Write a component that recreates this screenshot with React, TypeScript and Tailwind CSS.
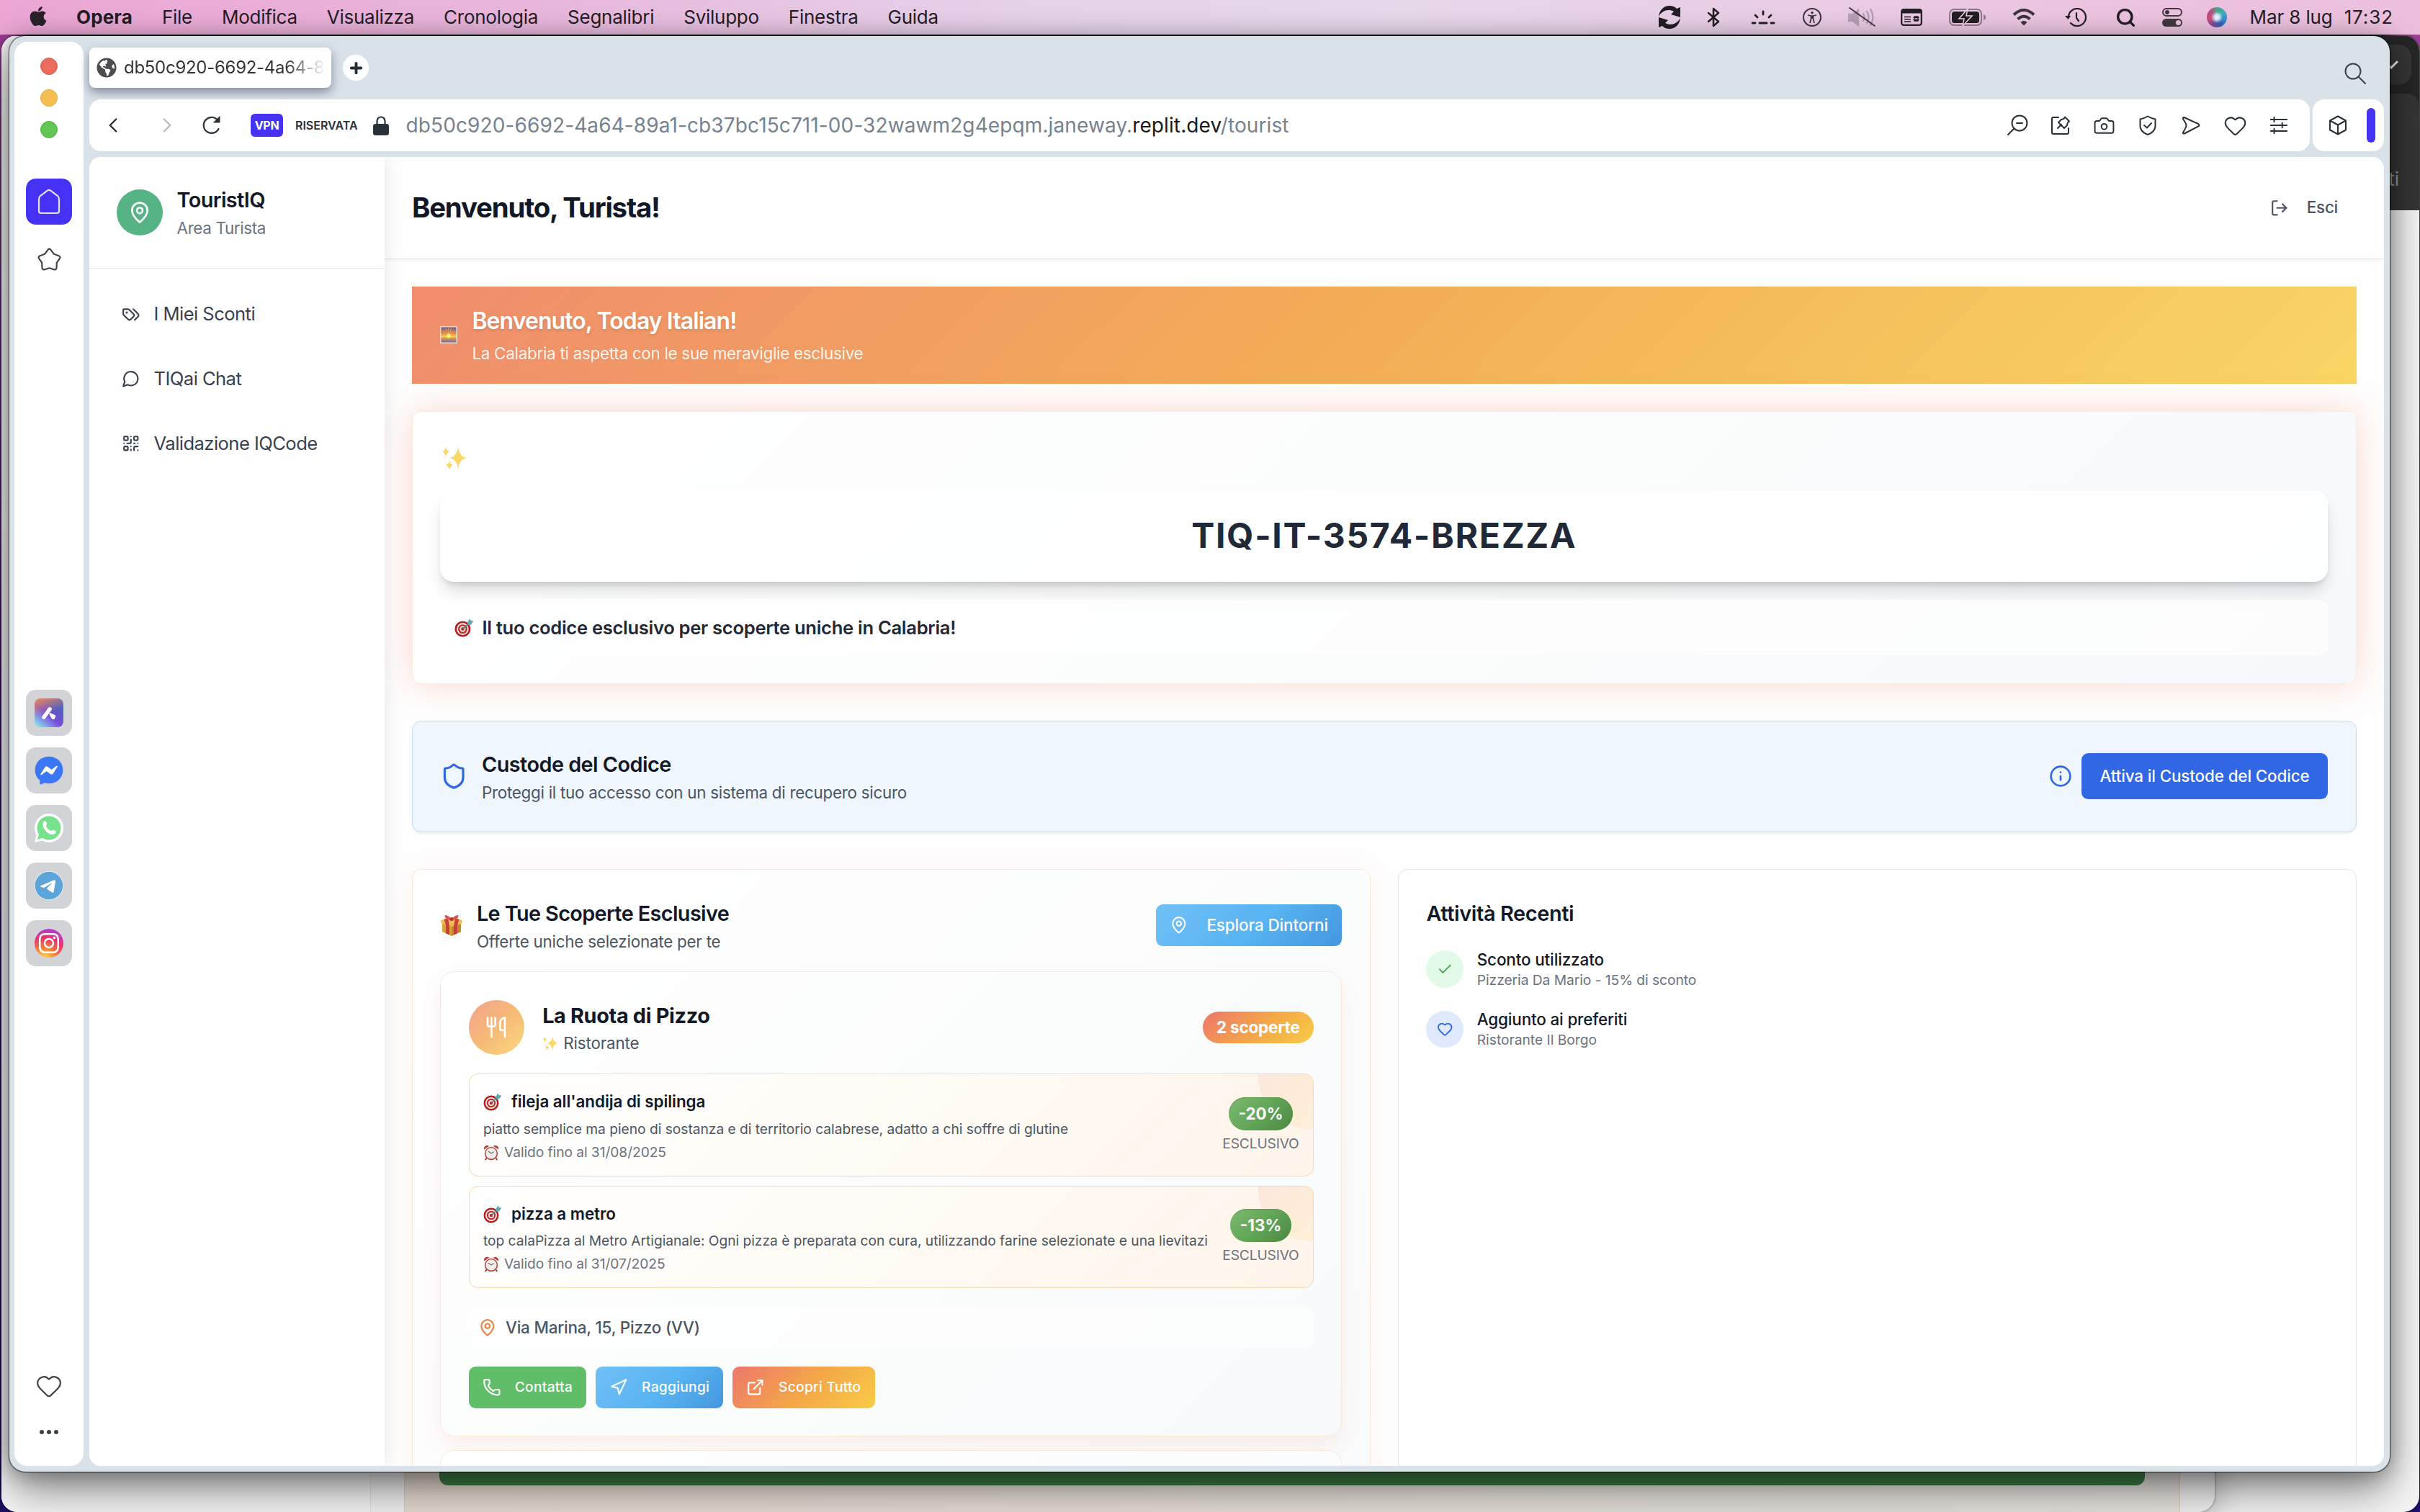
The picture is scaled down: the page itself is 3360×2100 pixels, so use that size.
import React from 'react';
import {
  Camera,
  Check,
  ChevronLeft,
  ChevronRight,
  ExternalLink,
  Heart,
  Info,
  LogOut,
  MapPin,
  Navigation,
  Phone,
  Plus,
  QrCode,
  Search,
  Shield,
  Utensils,
} from 'lucide-react';
import { FaApple, FaTelegram } from 'react-icons/fa6';
import { FaFacebookMessenger, FaInstagram, FaGlobeAmericas } from 'react-icons/fa';

/* ---------- Emoji drawings ---------- */

function Target({ className }: { className: string }) {
  return (
    <svg viewBox="0 0 26 26" className={className}>
      <circle cx="11" cy="15" r="10.5" fill="#b3201f" />
      <circle cx="11" cy="15" r="8" fill="#f3e9e6" />
      <circle cx="11" cy="15" r="6.2" fill="#c22a26" />
      <circle cx="11" cy="15" r="4" fill="#f3e9e6" />
      <circle cx="11" cy="15" r="2.2" fill="#b3201f" />
      <path d="M11 15 20 7" stroke="#4a8794" strokeWidth="1.6" />
      <path d="M17 6.500 20.500 1.200l1.400 2.700 3.600.6-3.600 5-4.200-.2z" fill="#5fa9b5" />
    </svg>
  );
}

function Sparkles({ className }: { className: string }) {
  return (
    <svg viewBox="0 0 36 36" className={className} fill="#fbd768">
      <path d="M23 1q1 15 12 17-11 2-12 17-1-15-12-17 11-2 12-17z" />
      <path d="M6 2q.7 6.200 5 7.500-4.300 1.300-5 7.500-.7-6.200-5-7.500 4.300-1.300 5-7.500z" />
      <path d="M11 21q.7 5.700 5 7-4.300 1.300-5 7-.7-5.700-5-7 4.300-1.300 5-7z" />
    </svg>
  );
}

function Gift({ className }: { className: string }) {
  return (
    <svg viewBox="0 0 32 32" className={className}>
      <path d="M3 13 16 17 29 13V25L16 31 3 25z" fill="#d9a23a" />
      <path d="M16 17 29 13V25L16 31z" fill="#c08a2c" />
      <path d="M1 9 16 5 31 9 30 14 16 18 2 14z" fill="#efbd52" />
      <path d="M5.500 8 11 6.500l2 10.800V29.600l-5-2.300V15.700zM26.500 8 21 6.500l-2 10.800V29.600l5-2.300V15.700z" fill="#c8403c" />
      <path d="M16 8C11 1 5 0 7 5c1 3 5 4 9 3zM16 8c5-7 11-8 9-3-1 3-5 4-9 3z" fill="#e0544f" />
      <circle cx="16" cy="7.500" r="2.500" fill="#b53430" />
    </svg>
  );
}

function AlarmClock({ className }: { className: string }) {
  return (
    <svg viewBox="0 0 24 24" className={className}>
      <path d="M5 20 3 23M19 20l2 3" stroke="#9b3530" strokeWidth="2" />
      <path d="M1 7a5 5 0 0 1 8-5zM23 7a5 5 0 0 0-8-5z" fill="#b3403a" />
      <circle cx="12" cy="13" r="10" fill="#b8453f" />
      <circle cx="12" cy="13" r="8.300" fill="#efecea" />
      <path d="m7.500 10 4.500 3 4-2.500" stroke="#555" strokeWidth="1.200" fill="none" />
    </svg>
  );
}

function Sunrise({ className }: { className: string }) {
  return (
    <svg viewBox="0 0 24 24" className={className}>
      <defs>
        <linearGradient id="sky" x1="0" y1="0" x2="0" y2="1">
          <stop offset="0" stopColor="#6d5a86" />
          <stop offset="0.450" stopColor="#e8933f" />
          <stop offset="0.620" stopColor="#f7cf57" />
          <stop offset="0.700" stopColor="#d9a052" />
          <stop offset="1" stopColor="#80688c" />
        </linearGradient>
      </defs>
      <rect width="24" height="24" fill="#e6dcd8" />
      <rect x="1.500" y="1.500" width="21" height="21" fill="url(#sky)" />
      <path d="M12 14 4 6M12 14 8 3M12 14V2M12 14l4-11M12 14l8-8M12 14 2 11M12 14l10-3" stroke="#f3b04c" strokeWidth="0.900" />
      <circle cx="12" cy="13.500" r="3" fill="#ffe978" />
    </svg>
  );
}

/* ---------- macOS menu bar ---------- */

const menus = ['File', 'Modifica', 'Visualizza', 'Cronologia', 'Segnalibri', 'Sviluppo', 'Finestra', 'Guida'];

function MenuBar() {
  return (
    <header className="relative flex h-12 items-center bg-[linear-gradient(90deg,#eba6d4_0%,#e8b6db_22%,#e5d2e9_42%,#e6d7e9_58%,#e8d0e7_70%,#ebc4e0_85%,#ecbfdd_100%)] pl-[38px] text-[26px] leading-none text-[#231d24]">
      <FaApple className="mr-[38px] h-[31px] w-[30px] -translate-y-[2px] text-[#2b2229]" />
      <span className="mr-[41px] font-bold tracking-[0.005em]">Opera</span>
      <nav className="flex gap-[41px] tracking-[-0.010em]">
        {menus.map((m) => (
          <span key={m}>{m}</span>
        ))}
      </nav>
      <div className="ml-auto flex items-center pr-[37px]">
        <svg viewBox="0 0 30 32" className="h-8 w-[30px]" fill="#231d24">
          <path d="M0 15C1 6 7 0 15 0c4 0 7 1 10 4l5-2v14l-13-4 4-4C14 4 5 6 0 15z" />
          <path d="M30 17c-1 9-7 15-15 15-4 0-7-1-10-4l-5 2V16l13 4-4 4c7 4 16 2 21-7z" />
        </svg>
        <svg viewBox="0 0 18 28" className="ml-[37px] h-7 w-[18px]" fill="none" stroke="#231d24" strokeWidth="2.500" strokeLinejoin="round" strokeLinecap="round">
          <path d="M2 8 16 20 9 26V2l7 6L2 20" />
        </svg>
        <svg viewBox="0 0 34 20" className="ml-[43px] h-5 w-[34px]" stroke="#231d24" strokeWidth="2.800" strokeLinecap="round">
          <path d="M2 18h4M12 18h10M28 18h4M17 2v4M6 7l3 3M28 7l-3 3" />
        </svg>
        <svg viewBox="0 0 26 26" className="ml-[38px] size-[26px]" fill="none" stroke="#3c343d" strokeWidth="2">
          <circle cx="13" cy="13" r="12" />
          <circle cx="13" cy="6.800" r="1.300" fill="#3c343d" strokeWidth="1" />
          <path d="M7 10l4.500 1h3L19 10M11.500 11v4L10 21M14.500 11v4l1.500 6M13 11v4" strokeWidth="1.700" />
        </svg>
        <svg viewBox="0 0 38 28" className="ml-[37px] h-7 w-[38px]" fill="none" stroke="#b49fb4" strokeWidth="2.400" strokeLinecap="round">
          <path d="M1 10h6l7-6v21l-7-6H1z" fill="#b49fb4" />
          <path d="M21 9q3 5 0 10M26 6q5 8 0 16M31 3q7 11 0 22" />
          <path d="M2 1 37 26" stroke="#3c343d" strokeWidth="1.800" />
        </svg>
        <svg viewBox="0 0 30 24" className="ml-[35px] h-6 w-[30px]" fill="none" stroke="#231d24" strokeWidth="2.200">
          <rect x="1.200" y="1.200" width="27.600" height="21.600" rx="3" />
          <path d="M2 4h26" strokeWidth="5" />
          <path d="M5 11.500h9M5 14.800h9M5 18h9" strokeWidth="1.600" />
          <path d="M19 11h5v6h-5zM17.500 12.500h8M17.500 15.500h8" strokeWidth="1.300" />
        </svg>
        <svg viewBox="0 0 51 24" className="ml-[37px] h-6 w-[51px]">
          <rect x="1" y="1" width="44" height="22" rx="6" fill="none" stroke="#8c7a8b" strokeWidth="2" />
          <rect x="4" y="4" width="38" height="16" rx="3.500" fill="#231d24" />
          <path d="M48 8v8q3-1 3-4t-3-4z" fill="#8c7a8b" />
          <path d="M26 0 14 14h7l-2 10 13-14h-8z" fill="#231d24" stroke="#ebcfe4" strokeWidth="1.600" />
        </svg>
        <svg viewBox="0 0 32 24" className="ml-[37px] h-6 w-8" fill="none" stroke="#3c343d" strokeWidth="4">
          <path d="M2 8.500Q16-4.500 30 8.500" />
          <path d="M7.500 14.500q8.500-7.500 17 0" />
          <path d="m16 23.500-4.500-4.500q4.500-4 9 0z" fill="#3c343d" stroke="none" />
        </svg>
        <svg viewBox="0 0 30 26" className="ml-[41px] h-[26px] w-[30px]" fill="none" stroke="#231d24" strokeWidth="2.200" strokeLinecap="round">
          <path d="M5 13A12 12 0 1 1 8 21M16 7v7l3 4" />
          <path d="M0 11h8l-3.500 5z" fill="#231d24" stroke="none" />
        </svg>
        <Search className="ml-[40px] size-[29px] text-[#231d24]" strokeWidth={2.800} />
        <svg viewBox="0 0 28 26" className="ml-[36px] h-[26px] w-7">
          <rect x="1" y="1" width="26" height="10" rx="5" fill="none" stroke="#43383f" strokeWidth="2" />
          <circle cx="7" cy="6" r="3" fill="#43383f" />
          <rect y="15" width="28" height="11" rx="5.500" fill="#43383f" />
          <circle cx="22.500" cy="20.500" r="3.600" fill="#ebc4e0" />
        </svg>
        <span className="ml-[34px] size-7 rounded-full bg-[radial-gradient(circle_at_50%_50%,#ffffff_0%,#c9e4f5_18%,transparent_42%),conic-gradient(from_0deg,#4fa08b,#3fb3b0,#3a8fd6,#345fb0,#7c4aa0,#d04a7a,#c24a80,#4fa08b)]" />
        <span className="ml-[32px] tracking-[-0.005em]">Mar 8 lug</span>
        <span className="ml-[16px] tracking-[0.035em]">17:32</span>
      </div>
    </header>
  );
}

/* ---------- Windows behind the browser ---------- */

function BackWindows() {
  return (
    <>
      <div className="absolute left-[400px] top-[49px] h-[2051px] w-[2959px] overflow-hidden rounded-[22px] bg-[#f6f6f6] shadow-[0_0_2px_#000]">
        <div className="flex h-[243px] flex-col items-end bg-[#262626]">
          <div className="mt-[13px] mr-[11px] flex h-14 w-[200px] items-center justify-end rounded-[18px] bg-[#363636] pr-[18px]">
            <svg viewBox="0 0 20 12" className="h-3 w-5" fill="none" stroke="#f0f0f0" strokeWidth="3" strokeLinecap="round">
              <path d="m2 2 8 8 8-8" />
            </svg>
          </div>
          <div className="mt-[12px] flex w-full flex-1 items-end justify-end rounded-tr-[18px] bg-[#363636] pr-[28px] pb-[30px] text-[26px] leading-none text-[#9a9a9a]">
            Preferiti
          </div>
        </div>
      </div>
      <div className="absolute left-[2px] top-[49px] flex h-[2051px] w-[3073px] items-end overflow-hidden rounded-[22px] bg-[#f3f3f3] shadow-[0_0_3px_#0008,0_10px_40px_rgba(0,0,0,0.250)]">
        <div className="h-full w-[513px] border-r border-[#e2e2e2] bg-[#f7f7f7]" />
        <div className="ml-[46px] flex h-[80px] w-[2466px] items-start border-x border-[#e5cdb8] bg-[linear-gradient(90deg,#e9ddd3,#e6e5e0)] px-[48px]">
          <div className="h-[43px] w-full rounded-b-[12px] bg-[#3e8044]" />
        </div>
      </div>
    </>
  );
}

/* ---------- Browser side bar ---------- */

const tile = 'flex size-16 items-center justify-center rounded-[14px] bg-[#d2d3d7]';

function BrowserRail() {
  return (
    <aside className="my-2 ml-[7px] flex w-24 flex-col items-center rounded-[18px] bg-white text-[#3d434a]">
      <div className="mt-[22px] flex flex-col gap-5">
        <span className="size-6 rounded-full border border-[#dc5a4e] bg-[#ec6b5f]" />
        <span className="size-6 rounded-full border border-[#dfa843] bg-[#f4bf50]" />
        <span className="size-6 rounded-full border border-[#55b145] bg-[#62c655]" />
      </div>
      <div className="mt-[56px] flex size-16 items-center justify-center rounded-[14px] bg-[#4532f5]">
        <svg viewBox="0 0 32 36" className="h-9 w-8" fill="none" stroke="#e6e2ff" strokeWidth="2.200">
          <path d="M13.500 2.800q2.500-1.800 5 0L28 10q2 1.600 2 4v17a3 3 0 0 1-3 3H5a3 3 0 0 1-3-3V14q0-2.400 2-4z" />
        </svg>
      </div>
      <svg viewBox="0 0 34 32" className="mt-8 h-[33px] w-[35px]" fill="none" stroke="currentColor" strokeWidth="2.100" strokeLinejoin="round">
        <path d="M10.800 8.500 14.800 3.200Q17 0 19.200 3.200L23.200 8.500 29.500 10.800Q33 12.100 30.600 15.200L27 20.200 26.800 26.700Q26.400 30.300 22.900 29.300L17 27.500 11.100 29.300Q7.600 30.300 7.200 26.700L7 20.200 3.400 15.200Q1 12.100 4.500 10.800Z" />
      </svg>
      <div className="mt-[581px] flex flex-col gap-4">
        <span className={tile}>
          <span className="flex size-10 items-center justify-center rounded-[8px] bg-[linear-gradient(160deg,#e08563_5%,transparent_50%),linear-gradient(40deg,#86d3ee_10%,#7a49d8_45%,#5161bd_75%)]">
            <svg viewBox="0 0 24 24" className="size-6" fill="#fff" stroke="#fff" strokeLinejoin="round">
              <path d="M5 18 13 7" strokeWidth="5.500" strokeLinecap="round" />
              <path d="M13.500 13.500 20 16.500 18.500 20q-1 0-2-1z" strokeWidth="2.500" />
            </svg>
          </span>
        </span>
        <span className={tile}>
          <span className="flex size-10 items-center justify-center bg-[radial-gradient(circle,#fff_50%,transparent_51%)]">
            <FaFacebookMessenger className="size-10 text-[#3b76f6]" />
          </span>
        </span>
        <span className={tile}>
          <svg viewBox="0 0 40 40" className="size-10">
            <path d="M20 0a20 20 0 1 1-9.500 37.500L0 40l2.600-10.200A20 20 0 0 1 20 0z" fill="#fff" />
            <circle cx="20" cy="20" r="16.500" fill="#77e28c" />
            <path d="M4 36l2.400-9 6 6.500z" fill="#77e28c" />
            <path d="M12 12c2-3 4-2 5 1 1 2-1 3-1 4 1 3 4 6 7 7 1 0 2-2 4-1 4 1 3 4 1 5-7 5-20-9-16-16z" fill="#fff" />
          </svg>
        </span>
        <span className={tile}>
          <span className="flex size-10 items-center justify-center rounded-full bg-white">
            <FaTelegram className="size-10 text-[#5da5d8]" />
          </span>
        </span>
        <span className={tile}>
          <span className="flex size-10 items-center justify-center rounded-full bg-[radial-gradient(circle_at_35%_105%,#fbd04f_5%,#f77737_35%,#e8356f_60%,#b83bd0_85%,#6a3df0_110%)]">
            <FaInstagram className="size-8 text-white" />
          </span>
        </span>
      </div>
      <Heart className="mt-[564px] size-[38px]" strokeWidth={1.400} />
      <div className="mt-[42px] flex gap-1">
        <span className="size-[6px] rounded-full bg-current" />
        <span className="size-[6px] rounded-full bg-current" />
        <span className="size-[6px] rounded-full bg-current" />
      </div>
    </aside>
  );
}

/* ---------- Browser tab strip and address bar ---------- */

function TabStrip() {
  return (
    <div className="flex h-[88px] items-start">
      <div className="mt-4 flex h-14 w-[336px] items-center rounded-[8px] bg-white pl-[10px] pr-[8px] shadow-[0_6px_14px_rgba(60,70,90,0.550)]">
        <FaGlobeAmericas className="size-[28px] shrink-0 text-[#4b4d50]" />
        <span className="ml-[10px] overflow-hidden whitespace-nowrap bg-[linear-gradient(90deg,#2f3338_80%,transparent_100%)] bg-clip-text text-[24px] tracking-[-0.012em] text-transparent">
          db50c920-6692-4a64-89a1
        </span>
      </div>
      <div className="ml-4 mt-[26px] flex size-9 items-center justify-center rounded-full bg-white">
        <Plus className="size-[23px] text-[#262c33]" strokeWidth={4} />
      </div>
      <svg viewBox="0 0 30 30" className="ml-auto mr-[25px] mt-[37px] size-[30px]" fill="none" stroke="#3b3f45" strokeWidth="2" strokeLinecap="round">
        <circle cx="12" cy="12" r="10.500" />
        <path d="m20 20 9 9" />
      </svg>
    </div>
  );
}

function AddressBar() {
  return (
    <div className="flex h-[72px] gap-1 text-[#293138]">
      <div className="flex flex-1 items-center rounded-[16px] bg-white pl-[16px] pr-[29px]">
        <ChevronLeft className="size-[34px]" strokeWidth={1.700} />
        <ChevronRight className="ml-[41px] size-[34px] text-[#b9bdc1]" strokeWidth={1.700} />
        <svg viewBox="0 0 26 26" className="ml-[32px] size-[26px]" fill="none" stroke="currentColor" strokeWidth="2.200" strokeLinecap="round">
          <path d="M22.500 18A11 11 0 1 1 22 7" />
          <path d="M24 1v8h-8z" fill="currentColor" strokeWidth="1" />
        </svg>
        <span className="ml-[41px] flex h-8 w-[45px] items-center justify-center rounded-[6px] bg-[#4532f5] text-[16px] font-bold tracking-[-0.020em] text-white">
          VPN
        </span>
        <span className="ml-[17px] text-[16px] font-semibold">RISERVATA</span>
        <svg viewBox="0 0 22 27" className="ml-[21px] h-[27px] w-[22px]">
          <path d="M5.500 12V7a5.500 5.500 0 0 1 11 0v5" fill="none" stroke="#293138" strokeWidth="2.200" />
          <rect y="11" width="22" height="16" rx="3.500" fill="#293138" />
        </svg>
        <span className="ml-[24px] whitespace-pre text-[28px] tracking-[0.004em] text-[#76828f]">
          db50c920-6692-4a64-89a1-cb37bc15c711-00-32wawm2g4epqm.janeway.
          <span className="text-[#17191c]">replit.dev</span>/tourist
        </span>
        <div className="ml-auto flex items-center gap-[30px]">
          <svg viewBox="0 0 30 30" className="size-[30px]" fill="none" stroke="currentColor" strokeWidth="2" strokeLinecap="round">
            <circle cx="18" cy="12" r="10.500" />
            <path d="M10 20 2 28M14 12h8" />
          </svg>
          <svg viewBox="0 0 30 30" className="size-[30px]" fill="none" stroke="currentColor" strokeWidth="2" strokeLinecap="round" strokeLinejoin="round">
            <path d="M12 4H5a2 2 0 0 0-2 2v19a2 2 0 0 0 2 2h19a2 2 0 0 0 2-2v-6" />
            <path d="m11 19 5-5M21 3.500l6 6-2 1.500-1 4-4 4-8-8 4-4 3.500-1z" />
          </svg>
          <Camera className="size-[31px]" strokeWidth={1.500} />
          <svg viewBox="0 0 30 30" className="size-[30px]" fill="none" stroke="currentColor" strokeWidth="2" strokeLinecap="round" strokeLinejoin="round">
            <path d="M15 2.500q5 3 10.500 4V16q0 8-10.500 12Q4.500 24 4.500 16V6.500q5.500-1 10.500-4z" />
            <path d="m10 15 4 3.500 6-6.500" />
          </svg>
          <svg viewBox="0 0 30 30" className="size-[30px]" fill="none" stroke="currentColor" strokeWidth="2" strokeLinejoin="round">
            <path d="M5.500 4 25 13q3 2 0 3.500L6 26.500q-2.500.500-2-1.500 3-5 4-7.500 1-2.500-.2-5L4 6q-.5-2.200 1.500-2z" />
          </svg>
          <Heart className="size-[33px]" strokeWidth={1.500} />
          <svg viewBox="0 0 30 30" className="size-[28px]" fill="none" stroke="currentColor" strokeWidth="2.100" strokeLinecap="round">
            <path d="M3 6.500h24M3 15h24M3 23.500h24M8 3v7M20 11.500v7M8 20v7" />
          </svg>
        </div>
      </div>
      <div className="flex w-[99px] items-center rounded-[16px] bg-white pl-[21px]">
        <svg viewBox="0 0 28 28" className="size-[28px]" fill="none" stroke="currentColor" strokeWidth="2" strokeLinejoin="round">
          <path d="M14 1.500 25 7.500v13L14 26.500 3 20.500v-13zM3 7.500l11 6 11-6M14 13.500v13" />
        </svg>
        <span className="ml-[26px] h-12 w-3 rounded-full bg-[#4532f5]" />
      </div>
    </div>
  );
}

/* ---------- TouristIQ page ---------- */

type IconProps = { className?: string };

function TagsIcon({ className }: IconProps) {
  return (
    <svg viewBox="0 0 24 24" className={className} fill="none" stroke="currentColor" strokeWidth="2" strokeLinecap="round" strokeLinejoin="round">
      <path d="m15 5 6.300 6.300a2.400 2.400 0 0 1 0 3.400L17 19" />
      <path d="M9.586 5.586A2 2 0 0 0 8.172 5H3a1 1 0 0 0-1 1v5.172a2 2 0 0 0 .586 1.414L8.290 18.290a2.426 2.426 0 0 0 3.420 0l3.580-3.580a2.426 2.426 0 0 0 0-3.420z" />
      <circle cx="6.500" cy="9.500" r=".5" fill="currentColor" />
    </svg>
  );
}

function ChatIcon({ className }: IconProps) {
  return (
    <svg viewBox="0 0 24 24" className={className} fill="none" stroke="currentColor" strokeWidth="2" strokeLinecap="round" strokeLinejoin="round">
      <path d="M7.900 20A9 9 0 1 0 4 16.100L2 22Z" />
    </svg>
  );
}

const navItems = [
  { icon: TagsIcon, label: 'I Miei Sconti' },
  { icon: ChatIcon, label: 'TIQai Chat' },
  { icon: QrCode, label: 'Validazione IQCode' },
];

function PageNav() {
  return (
    <aside className="z-10 w-64 shrink-0 bg-white shadow-[0_0_24px_rgba(0,0,0,0.100)]">
      <div className="flex items-center gap-3 border-b border-gray-200 p-6">
        <span className="flex size-10 items-center justify-center rounded-full bg-[#55b384] text-white">
          <MapPin className="size-5" />
        </span>
        <div>
          <div className="text-lg font-semibold tracking-[-0.020em] text-[#121827]">TouristIQ</div>
          <div className="text-sm tracking-[-0.016em] text-[#6b7280]">Area Turista</div>
        </div>
      </div>
      <nav className="mt-5 flex flex-col gap-4 px-4">
        {navItems.map(({ icon: Icon, label }) => (
          <div key={label} className="flex h-10 items-center gap-3 px-3 text-[#374151]">
            <Icon className="size-4" />
            <span className="text-base tracking-[-0.022em]">{label}</span>
          </div>
        ))}
      </nav>
    </aside>
  );
}

const offers = [
  {
    title: "fileja all'andija di spilinga",
    text: 'piatto semplice ma pieno di sostanza e di territorio calabrese, adatto a chi soffre di glutine',
    until: 'Valido fino al 31/08/2025',
    pct: '-20%',
  },
  {
    title: 'pizza a metro',
    text: 'top calaPizza al Metro Artigianale: Ogni pizza è preparata con cura, utilizzando farine selezionate e una lievitazione',
    until: 'Valido fino al 31/07/2025',
    pct: '-13%',
  },
];

function Offer({ offer }: { offer: (typeof offers)[number] }) {
  return (
    <div className="relative flex items-center gap-3 overflow-hidden rounded-lg border border-[#f9d9ae] bg-[linear-gradient(135deg,#ffffff_0%,#fffcf7_40%,#fef4ea_100%)] p-3">
      <span className="absolute top-0 right-0 size-12 rounded-bl-full bg-[linear-gradient(135deg,#ee7a6e,#f3a54a_50%,#f8cb46)] opacity-[0.120]" />
      <div className="min-w-0 flex-1">
        <div className="flex h-6 items-center">
          <Target className="size-[26px]" />
          <span className="ml-[13px] text-sm font-semibold tracking-[-0.002em] text-[#121827]">{offer.title}</span>
        </div>
        <div className="mt-1 overflow-hidden text-xs whitespace-nowrap tracking-[-0.001em] text-[#4b5563]">{offer.text}</div>
        <div className="mt-1 flex items-center text-xs tracking-[-0.003em] text-[#6b7280]">
          <AlarmClock className="mr-[7px] size-[22px]" />
          <span>{offer.until}</span>
        </div>
      </div>
      <div className="relative flex flex-col items-center">
        <span className="rounded-full bg-[linear-gradient(135deg,#7dba70,#62a657_50%,#4a8742)] px-[14px] py-[7px] text-sm font-bold text-white shadow-[inset_0_1px_0_#5c9a52]">{offer.pct}</span>
        <span className="mt-[6px] text-xs tracking-[-0.008em] text-[#6b7280]">ESCLUSIVO</span>
      </div>
    </div>
  );
}

const blue = 'bg-[linear-gradient(135deg,#71c0f6_0%,#57b3f1_55%,#4496df_100%)]';
const sunset = 'bg-[linear-gradient(135deg,#ee766d_0%,#f3a549_50%,#f8cc45_100%)]';
const smallButton = 'flex h-9 items-center gap-3 rounded-md px-3 text-xs font-medium tracking-[0.014em] text-white';

function Discoveries() {
  return (
    <section className="min-w-0 flex-1 rounded-lg border border-[#fbe8d6] bg-[linear-gradient(135deg,#ffffff,#f9fafb)] p-6 shadow-[0_6px_40px_rgba(255,107,80,0.090)]">
      <div className="flex items-center justify-between">
        <div className="flex items-center">
          <Gift className="size-[32px]" />
          <div className="ml-[18.500px]">
            <div className="text-lg font-semibold tracking-[-0.021em] text-[#121827]">Le Tue Scoperte Esclusive</div>
            <div className="text-sm tracking-[-0.010em] text-[#4b5563]">Offerte uniche selezionate per te</div>
          </div>
        </div>
        <div className={`flex h-9 items-center gap-4 rounded-md px-3 text-sm font-medium tracking-[-0.004em] text-white ${blue}`}>
          <MapPin className="size-4" />
          Esplora Dintorni
        </div>
      </div>

      <div className="mt-4 rounded-xl border border-[#fbe9d6] bg-[linear-gradient(135deg,#ffffff,#fbfcfc_50%,#f7f9fb)] p-6 shadow-[0_12px_28px_rgba(240,110,90,0.100)]">
        <div className="flex items-center gap-4">
          <span className="flex size-12 items-center justify-center rounded-full bg-[linear-gradient(135deg,#f1a18d,#f6ba76_50%,#f9d87f)] text-white">
            <Utensils className="size-5" />
          </span>
          <div className="flex-1">
            <div className="text-lg font-bold tracking-[-0.011em] text-[#121827]">La Ruota di Pizzo</div>
            <div className="flex items-center text-sm tracking-[-0.006em] text-[#4b5563]">
              <Sparkles className="mr-[7px] size-[22px]" />
              Ristorante
            </div>
          </div>
          <span className={`rounded-full px-3 py-1 text-sm font-bold tracking-[-0.007em] text-white ${sunset}`}>2 scoperte</span>
        </div>

        <div className="mt-4 flex flex-col gap-2">
          {offers.map((o) => (
            <Offer key={o.title} offer={o} />
          ))}
        </div>

        <div className="mt-4 flex items-center gap-2 rounded-lg bg-white/60 p-2 text-sm tracking-[-0.008em] text-[#4b5563]">
          <MapPin className="size-4 text-[#e9853f]" />
          <span className="font-medium">Via Marina, 15, Pizzo (VV)</span>
        </div>

        <div className="mt-4 flex gap-2">
          <div className={`${smallButton} bg-[#61be68]`}>
            <Phone className="size-4" />
            Contatta
          </div>
          <div className={`${smallButton} ${blue}`}>
            <Navigation className="size-4" />
            Raggiungi
          </div>
          <div className={`${smallButton} ${sunset}`}>
            <ExternalLink className="size-4" />
            Scopri Tutto
          </div>
        </div>
      </div>

      <div className="mt-3 h-20 rounded-xl border border-[#fbe9d6] bg-[linear-gradient(135deg,#ffffff,#fafbfc)]" />
    </section>
  );
}

function Activity() {
  return (
    <section className="min-w-0 flex-1 rounded-lg border border-[#e3e5e8] bg-[#fefefe] p-6">
      <div className="text-lg font-semibold tracking-[-0.012em] text-[#121827]">Attività Recenti</div>
      <div className="mt-4 flex flex-col gap-4">
        <div className="flex items-center gap-3">
          <span className="flex size-8 items-center justify-center rounded-full bg-[#e1fbe8] text-[#4ba152]">
            <Check className="size-3.5" />
          </span>
          <div>
            <div className="text-sm font-medium tracking-[-0.005em] text-[#121827]">Sconto utilizzato</div>
            <div className="text-xs tracking-[-0.002em] text-[#6b7280]">Pizzeria Da Mario - 15% di sconto</div>
          </div>
        </div>
        <div className="flex items-center gap-3">
          <span className="flex size-8 items-center justify-center rounded-full bg-[#dee9fc] text-[#3166e4]">
            <Heart className="size-3.5" />
          </span>
          <div>
            <div className="text-sm font-medium tracking-[-0.006em] text-[#121827]">Aggiunto ai preferiti</div>
            <div className="text-xs text-[#6b7280]">Ristorante Il Borgo</div>
          </div>
        </div>
      </div>
    </section>
  );
}

function PageMain() {
  return (
    <main className="flex min-w-0 flex-1 flex-col">
      <div className="flex shrink-0 items-center justify-between border-b border-gray-200 p-6 shadow-[0_2px_4px_rgba(0,0,0,0.050)]">
        <h1 className="text-2xl font-bold tracking-[-0.031em] text-[#121827]">Benvenuto, Turista!</h1>
        <div className="flex h-10 items-center gap-4 px-4 text-sm font-medium tracking-[-0.010em] text-[#4b5563]">
          <LogOut className="size-4" />
          Esci
        </div>
      </div>

      <div className="flex flex-col p-6">
        <div className="flex items-center bg-[linear-gradient(135deg,#f08d6e_0%,#f3ae55_50%,#f8d664_100%)] px-6 py-4 text-white">
          <Sunrise className="mx-[1px] size-[24px]" />
          <div className="ml-[19px]">
            <div className="text-xl font-semibold tracking-[-0.029em] [text-shadow:0_2px_4px_rgba(0,0,0,0.120)]">Benvenuto, Today Italian!</div>
            <div className="mt-1 text-sm tracking-[-0.012em] opacity-90">La Calabria ti aspetta con le sue meraviglie esclusive</div>
          </div>
        </div>

        <section className="mt-6 rounded-lg border border-[#fce9d8] bg-[linear-gradient(135deg,#ffffff_0%,#fbfcfc_50%,#f7f8fb_100%)] p-6 shadow-[0_0_50px_rgba(244,120,88,0.290)]">
          <div className="flex h-7 items-center">
            <Sparkles className="ml-[2px] size-[36px] translate-y-[3px]" />
          </div>
          <div className="mt-4 flex h-[127px] items-center justify-center rounded-xl bg-white/80 text-[48px] font-bold tracking-[0.036em] text-[#1f2937] shadow-[0_16px_24px_-5px_rgba(0,0,0,0.150),0_6px_10px_-4px_rgba(0,0,0,0.140)]">
            TIQ-IT-3574-BREZZA
          </div>
          <div className="mt-4 flex h-12 items-center rounded-lg bg-white/60 px-3">
            <Target className="size-[27px]" />
            <span className="ml-[12px] text-base font-semibold tracking-[-0.012em] text-[#1f2937]">
              Il tuo codice esclusivo per scoperte uniche in Calabria!
            </span>
          </div>
        </section>

        <section className="mt-8 flex items-center rounded-lg border border-[#c4dbf5] bg-[#eff6fe] p-6 shadow-[0_2px_3px_rgba(0,0,0,0.050)]">
          <Shield className="size-6 text-[#3166e4]" />
          <div className="ml-3 flex-1">
            <div className="text-lg font-semibold tracking-[-0.018em] text-[#121827]">Custode del Codice</div>
            <div className="text-sm tracking-[-0.012em] text-[#4b5563]">Proteggi il tuo accesso con un sistema di recupero sicuro</div>
          </div>
          <Info className="size-5 text-[#3166e4]" />
          <div className="ml-2 flex h-10 items-center rounded-md bg-[#3166e4] px-4 text-sm font-medium tracking-[-0.005em] text-white">
            Attiva il Custode del Codice
          </div>
        </section>

        <div className="mt-8 flex gap-6">
          <Discoveries />
          <Activity />
        </div>
      </div>
    </main>
  );
}

function TouristPage() {
  return (
    <div className="mt-[8px] flex min-h-0 flex-1 overflow-hidden rounded-[16px] bg-[#fefefe] [--radius-lg:12.8px] [--radius-md:9.6px] [--radius-xl:19.2px] [--spacing:6.4px] [--text-2xl:38.4px] [--text-base:25.6px] [--text-lg:28.8px] [--text-sm:22.4px] [--text-xl:32px] [--text-xs:19.2px]">
      <PageNav />
      <PageMain />
    </div>
  );
}

export default function App() {
  return (
    <div className="relative h-[2100px] w-[3360px] overflow-hidden bg-[linear-gradient(180deg,#a83c9e_0%,#7a3a86_12%,#3a1270_50%,#21106a_100%)] font-['Inter',sans-serif]">
      <BackWindows />
      <MenuBar />
      <div className="absolute top-[50px] left-[13px] flex h-[1994px] w-[3305px] rounded-[22px] bg-[#d9e1e9] shadow-[0_0_0_1px_rgba(0,0,0,0.450),0_0_0_2px_rgba(0,0,0,0.150),0_26px_60px_rgba(0,0,0,0.450),0_4px_30px_rgba(0,0,0,0.300)]">
        <BrowserRail />
        <div className="mb-2 mr-2 ml-2 flex min-w-0 flex-1 flex-col">
          <TabStrip />
          <AddressBar />
          <TouristPage />
        </div>
      </div>
      <div className="absolute top-12 left-0 h-[2px] w-full bg-[linear-gradient(90deg,#a83c9e_0px,#111_40px,#111_3300px,#a8508a_3360px)]" />
    </div>
  );
}
